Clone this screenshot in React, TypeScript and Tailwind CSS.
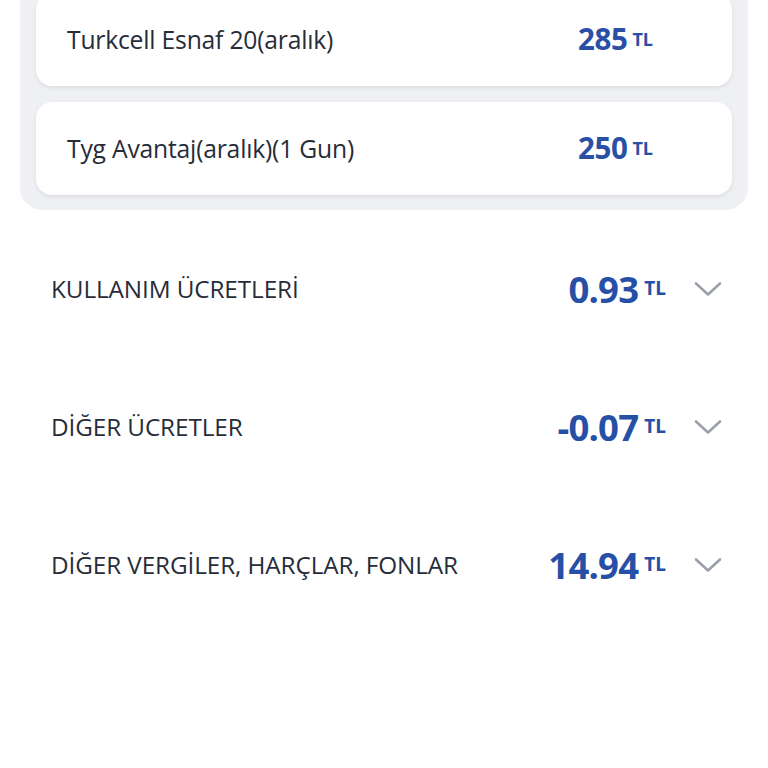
const PACKAGES = [
  { name: "Turkcell Esnaf 20(aralık)", price: "285" },
  { name: "Tyg Avantaj(aralık)(1 Gun)", price: "250" },
];

const FEES = [
  { name: "KULLANIM ÜCRETLERİ", amount: "0.93" },
  { name: "DİĞER ÜCRETLER", amount: "-0.07" },
  { name: "DİĞER VERGİLER, HARÇLAR, FONLAR", amount: "14.94" },
];

function Chevron() {
  return (
    <svg width="28" height="16" viewBox="0 0 28 16" fill="none">
      <path
        d="M2 2.5 L14 13.5 L26 2.5"
        stroke="#9aa0ab"
        strokeWidth="2.6"
        strokeLinecap="round"
        strokeLinejoin="round"
      />
    </svg>
  );
}

export default function App() {
  return (
    <div
      className="w-[768px] h-[768px] overflow-hidden bg-white"
      style={{ fontFamily: "'Open Sans', 'Noto Sans', sans-serif" }}
    >
      <div className="mx-[20px] -mt-[22px] rounded-b-[22px] bg-[#eef0f3] px-[16px] pt-[15px] pb-[15px] flex flex-col gap-[16px]">
        {PACKAGES.map((p) => (
          <div
            key={p.name}
            className="h-[93px] rounded-[16px] bg-white shadow-[0_2px_4px_rgba(0,0,0,0.08)] flex items-center pl-[31px] pr-[79px]"
          >
            <span className="flex-1 text-[24.7px] tracking-[-0.2px] text-[#272d38]">{p.name}</span>
            <span className="flex items-center text-[#2a50a6] font-bold">
              <span className="text-[29.5px] tracking-[-0.4px]">{p.price}</span>
              <span className="ml-[5px] -mt-[1px] text-[18px]">TL</span>
            </span>
          </div>
        ))}
      </div>

      <div className="mt-[10px] flex flex-col">
        {FEES.map((f) => (
          <div key={f.name} className="h-[138px] flex items-center pl-[51px] pr-[46px]">
            <span className="flex-1 text-[24.3px] tracking-[-0.1px] text-[#272d38]">{f.name}</span>
            <span className="flex items-center text-[#2650a6] font-bold">
              <span className="text-[36.5px] tracking-[-0.8px]">{f.amount}</span>
              <span className="ml-[6px] -mt-[2px] text-[19px]">TL</span>
            </span>
            <span className="ml-[28px] flex items-center">
              <Chevron />
            </span>
          </div>
        ))}
      </div>
    </div>
  );
}
